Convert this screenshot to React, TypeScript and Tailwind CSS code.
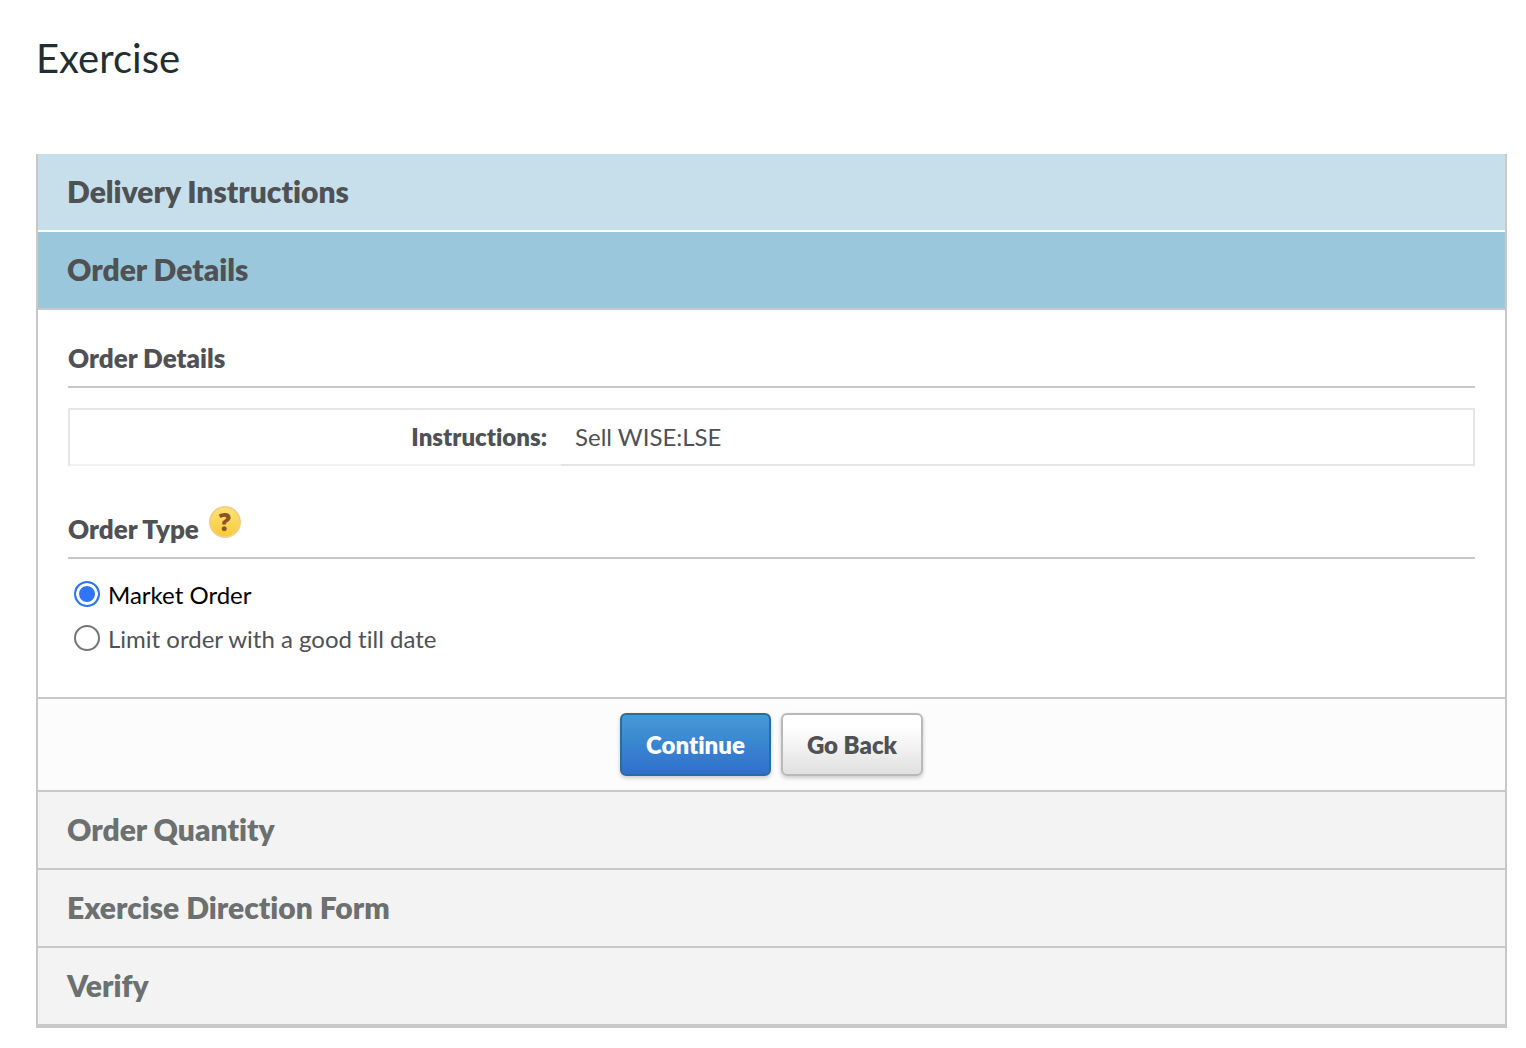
import React, { useState } from 'react';
import clsx from 'clsx';

type StepStatus = 'done' | 'active' | 'pending';

interface StepHeaderProps {
  title: string;
  status: StepStatus;
  last?: boolean;
}

const StepHeader: React.FC<StepHeaderProps> = ({ title, status, last }) => (
  <h2
    className={clsx(
      'px-[29px] pt-[17px] pb-[19px] text-[30px] leading-10 font-extrabold',
      status === 'done' && 'border-b-2 border-white bg-[#c7dfea] text-[#4f5154]',
      status === 'active' && 'border-b-2 border-[#c8c8c8] bg-[#9ac7dc] text-[#4f5154]',
      status === 'pending' && 'border-[#c8c8c8] bg-[#f3f3f3] text-[#6c706f]',
      status === 'pending' && (last ? 'border-b-4' : 'border-b-2')
    )}
  >
    {title}
  </h2>
);

const HelpButton: React.FC = () => (
  <button
    type="button"
    aria-label="Help"
    className="mb-[7px] flex size-8 items-center justify-center rounded-full border-2 border-[#f3cf86] bg-linear-to-b from-[#fbe272] to-[#f8cb35] font-['Open_Sans',sans-serif] text-[24px] leading-7 font-extrabold text-[#8f5127]"
  >
    ?
  </button>
);

const ORDER_TYPES = [
  { id: 'market', label: 'Market Order' },
  { id: 'limit', label: 'Limit order with a good till date' },
];

export default function App() {
  const [orderType, setOrderType] = useState('market');

  return (
    <main className="bg-white pt-[34px] pr-[19px] pb-5 pl-9 font-[Lato,sans-serif] text-[#4f5154] [font-variant-ligatures:none]">
      <h1 className="mb-[72px] text-[40px] leading-[48px] text-[#222e2f]">Exercise</h1>

      <div className="border-x-2 border-[#c8c8c8]">
        <StepHeader title="Delivery Instructions" status="done" />
        <StepHeader title="Order Details" status="active" />

        <form onSubmit={(e) => e.preventDefault()}>
          <div className="px-[30px] pt-8 pb-[37px]">
            <h3 className="border-b-2 border-[#c8c8c8] pb-3 text-[26px] leading-8 font-extrabold">
              Order Details
            </h3>

            <table className="mt-5 w-full table-fixed border-separate border-spacing-0 border-2 border-b-0 border-[#e5e5e5] text-[24px] leading-8">
              <tbody>
                <tr>
                  <th
                    scope="row"
                    className="w-[35%] border-b-2 border-[#f2f2f2] py-[11px] pr-[14px] text-right font-extrabold"
                  >
                    Instructions:
                  </th>
                  <td className="border-b-2 border-[#e5e5e5] py-[11px] pl-[14px]">
                    Sell WISE:LSE
                  </td>
                </tr>
              </tbody>
            </table>

            <div className="mt-10 flex items-end gap-[10px] border-b-2 border-[#c8c8c8] pb-3">
              <h3 className="text-[26px] leading-8 font-extrabold">Order Type</h3>
              <HelpButton />
            </div>

            <div className="pt-[13px] text-[24px]" role="radiogroup" aria-label="Order Type">
              {ORDER_TYPES.map(({ id, label }) => (
                <div key={id} className="flex h-11 items-center gap-2 pl-[6px]">
                  <input
                    type="radio"
                    id={id}
                    name="orderType"
                    checked={orderType === id}
                    onChange={() => setOrderType(id)}
                    className="size-[26px] shrink-0 appearance-none rounded-full border-2 border-[#767676] bg-white checked:border-[#3075f6] checked:bg-[#3075f6] checked:shadow-[inset_0_0_0_3px_white]"
                  />
                  <label
                    htmlFor={id}
                    className={clsx('pt-[2px] leading-8', orderType === id && 'text-black')}
                  >
                    {label}
                  </label>
                </div>
              ))}
            </div>
          </div>

          <div className="flex justify-center gap-[10px] border-y-2 border-[#c8c8c8] bg-[#fcfcfc] py-[14px] text-[24px] leading-[35px] font-extrabold">
            <button
              type="submit"
              className="rounded-md border-2 border-[#2c6c99] bg-linear-to-b from-[#459ad3] to-[#306fcd] px-6 py-3 text-white shadow-[0_2px_4px_rgba(0,0,0,0.2)]"
            >
              Continue
            </button>
            <button
              type="button"
              className="rounded-md border-2 border-[#b9b9b9] bg-linear-to-b from-white from-20% to-[#e0e0e0] px-6 py-3 shadow-[0_2px_4px_rgba(0,0,0,0.2)]"
            >
              Go Back
            </button>
          </div>
        </form>

        <StepHeader title="Order Quantity" status="pending" />
        <StepHeader title="Exercise Direction Form" status="pending" />
        <StepHeader title="Verify" status="pending" last />
      </div>
    </main>
  );
}
